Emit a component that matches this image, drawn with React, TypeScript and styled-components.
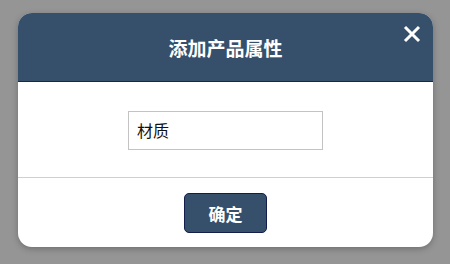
import React from "react";
import styled, { createGlobalStyle } from "styled-components";

const Global = createGlobalStyle`
  html, body { margin: 0; padding: 0; background: #959595; }
  body { font-family: "Noto Sans CJK SC", "Noto Sans", sans-serif; }
  * { box-sizing: border-box; }
`;

const Page = styled.div`
  width: 450px;
  height: 264px;
  padding: 13px 17px 0 18px;
`;

const Dialog = styled.div`
  width: 415px;
  height: 234px;
  background: #fff;
  border-radius: 14px;
  overflow: hidden;
  display: flex;
  flex-direction: column;
  box-shadow: 0 2px 6px rgba(0, 0, 0, 0.25);
`;

const Header = styled.div`
  position: relative;
  height: 69px;
  background: #36506c;
  border-bottom: 1px solid #16284a;
  display: flex;
  align-items: center;
  justify-content: center;
  color: #fff;
  font-size: 19px;
  font-weight: 700;
  padding-top: 1px;
`;

const Close = styled.button`
  position: absolute;
  top: 10px;
  right: 10px;
  width: 22px;
  height: 22px;
  padding: 0;
  border: none;
  background: transparent;
  display: flex;
  align-items: center;
  justify-content: center;
  cursor: pointer;
`;

const Body = styled.div`
  height: 96px;
  display: flex;
  align-items: center;
  justify-content: center;
  border-bottom: 1px solid #cfcfcf;
`;

const Input = styled.input`
  width: 195px;
  height: 39px;
  border: 1px solid #c3c3c3;
  padding: 0 8px;
  font-family: inherit;
  font-size: 16px;
  color: #111;
  outline: none;
  margin-top: 1px;
`;

const Footer = styled.div`
  flex: 1;
  display: flex;
  align-items: flex-start;
  justify-content: center;
  padding-top: 15px;
`;

const Button = styled.button`
  width: 83px;
  height: 40px;
  background: #36506c;
  border: 1px solid #141e4a;
  border-radius: 5px;
  color: #fff;
  font-family: inherit;
  font-size: 17px;
  font-weight: 700;
  cursor: pointer;
`;

export default function App() {
  return (
    <>
      <Global />
      <Page>
        <Dialog>
          <Header>
            添加产品属性
            <Close aria-label="close">
              <svg width="18" height="18" viewBox="0 0 18 18">
                <path d="M2 2 L16 16 M16 2 L2 16" stroke="#fff" strokeWidth="3" strokeLinecap="butt" />
              </svg>
            </Close>
          </Header>
          <Body>
            <Input defaultValue="材质" />
          </Body>
          <Footer>
            <Button>确定</Button>
          </Footer>
        </Dialog>
      </Page>
    </>
  );
}
